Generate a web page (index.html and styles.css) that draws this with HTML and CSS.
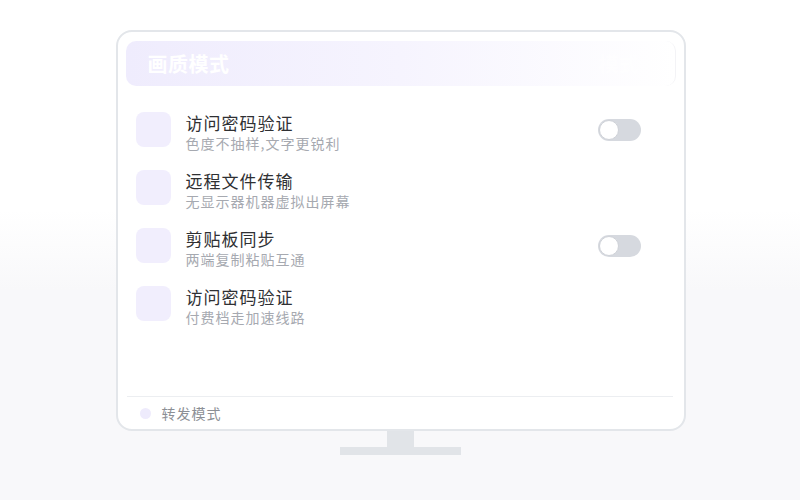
FILE: index.html
```html
<!DOCTYPE html>
<html lang="zh-CN">
<head>
  <meta charset="UTF-8">
  <meta name="viewport" content="width=device-width, initial-scale=1.0">
  <title>画质模式</title>
  <link rel="stylesheet" href="styles.css">
</head>
<body>
  <div class="stage">
    <div class="monitor">
      <div class="header">
        <span class="header-title">画质模式</span>
        <span class="header-ghost">模式</span>
      </div>

      <div class="list">
        <div class="row">
          <div class="icon"></div>
          <div class="text">
            <div class="title">访问密码验证</div>
            <div class="sub">色度不抽样,文字更锐利</div>
          </div>
          <div class="toggle"><span class="knob"></span></div>
        </div>
        <div class="row">
          <div class="icon"></div>
          <div class="text">
            <div class="title">远程文件传输</div>
            <div class="sub">无显示器机器虚拟出屏幕</div>
          </div>
        </div>
        <div class="row">
          <div class="icon"></div>
          <div class="text">
            <div class="title">剪贴板同步</div>
            <div class="sub">两端复制粘贴互通</div>
          </div>
          <div class="toggle"><span class="knob"></span></div>
        </div>
        <div class="row">
          <div class="icon"></div>
          <div class="text">
            <div class="title">访问密码验证</div>
            <div class="sub">付费档走加速线路</div>
          </div>
        </div>
      </div>

      <div class="footer">
        <span class="dot"></span>
        <span class="footer-text">转发模式</span>
      </div>
    </div>
    <div class="neck"></div>
    <div class="base"></div>
  </div>
</body>
</html>
```

FILE: styles.css
```css
body {
  margin: 0;
  padding: 0;
  height: 500px;
  font-family: 'Noto Sans CJK SC', 'Noto Sans', sans-serif;
  background: linear-gradient(180deg, #fff 0, #fff 210px, #f8f8fa 290px, #f8f8fa 100%);
  overflow: hidden;
}

.stage {
  display: flex;
  flex-direction: column;
  align-items: center;
  padding-top: 30px;
  padding-left: 1px;
}

.monitor {
  box-sizing: border-box;
  width: 570px;
  height: 401px;
  border: 2px solid #e3e6ea;
  border-radius: 16px;
  background-color: #fff;
  display: flex;
  flex-direction: column;
}

.header {
  margin: 9px 8px 0 8px;
  height: 45px;
  border-radius: 10px;
  background: linear-gradient(90deg, #efecfd 0%, #f6f4fe 50%, #fff 100%);
  display: flex;
  align-items: center;
  justify-content: space-between;
  padding: 0 36px 0 22px;
  border-right: 1px solid #f3f3f6;
}

.header-title {
  font-size: 20px;
  font-weight: 600;
  color: #fff;
  letter-spacing: 0.5px;
}

.header-ghost {
  font-size: 20px;
  font-weight: 600;
  color: rgba(255, 255, 255, 0.6);
}

.list {
  flex: 1;
  padding: 26px 43px 0 18px;
}

.row {
  display: flex;
  align-items: flex-start;
  height: 58px;
}

.icon {
  width: 35px;
  height: 35px;
  border-radius: 8px;
  background-color: #f1eefd;
  flex-shrink: 0;
}

.text {
  flex: 1;
  margin-left: 15px;
}

.title {
  font-size: 17px;
  line-height: 21px;
  letter-spacing: 1px;
  color: #2f3033;
}

.sub {
  font-size: 14px;
  line-height: 20px;
  letter-spacing: 1px;
  color: #a6a9b0;
}

.toggle {
  position: relative;
  width: 43px;
  height: 22px;
  margin-top: 7px;
  border-radius: 11px;
  background-color: #d6d9df;
}

.knob {
  position: absolute;
  left: 1px;
  top: 1px;
  width: 18px;
  height: 18px;
  border-radius: 50%;
  background-color: #fff;
  border: 1px solid #cfd2d8;
}

.footer {
  margin: 0 11px 0 9px;
  height: 32px;
  border-top: 1px solid #eceef1;
  display: flex;
  align-items: center;
  padding-left: 13px;
}

.dot {
  width: 11px;
  height: 11px;
  border-radius: 50%;
  background-color: #eeebfc;
}

.footer-text {
  margin-left: 11px;
  font-size: 14px;
  letter-spacing: 1px;
  color: #8c8f95;
}

.neck {
  width: 27px;
  height: 16px;
  background-color: #e1e4e8;
}

.base {
  width: 121px;
  height: 8px;
  background-color: #e1e4e8;
}
```
